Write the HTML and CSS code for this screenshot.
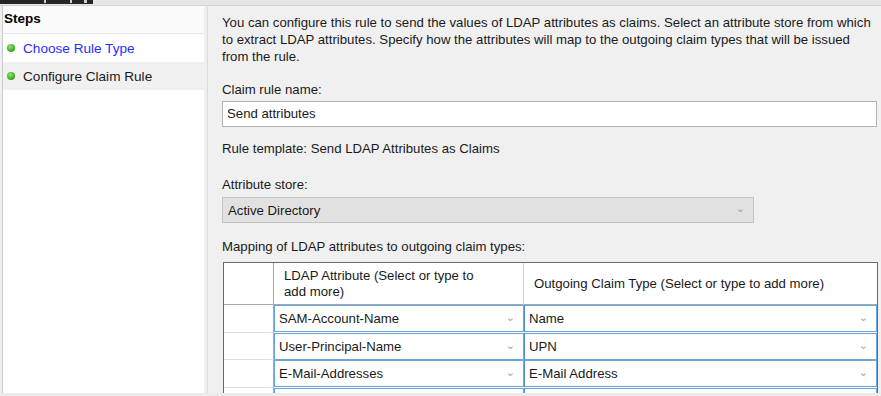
FILE: index.html
```html
<!DOCTYPE html>
<html>
<head>
<meta charset="utf-8">
<link rel="stylesheet" href="styles.css">
</head>
<body>
<div class="topstrip"><div class="darkbar"><span class="mark m1"></span><span class="mark m2"></span><span class="mark m3"></span></div></div>
<div class="main">
  <div class="steps">
    <div class="steps-inner">
      <div class="steps-head">Steps</div>
      <div class="step"><span class="dot"></span><span class="link">Choose Rule Type</span></div>
      <div class="step current"><span class="dot"></span><span>Configure Claim Rule</span></div>
    </div>
  </div>
  <div class="divider"></div>
  <div class="content">
    <p class="intro">You can configure this rule to send the values of LDAP attributes as claims. Select an attribute store from which<br>to extract LDAP attributes. Specify how the attributes will map to the outgoing claim types that will be issued<br>from the rule.</p>
    <div class="label l-name">Claim rule name:</div>
    <div class="textbox">Send attributes</div>
    <div class="label l-template">Rule template: Send LDAP Attributes as Claims</div>
    <div class="label l-store">Attribute store:</div>
    <div class="select"><span>Active Directory</span><span class="chev">&#8964;</span></div>
    <div class="label l-map">Mapping of LDAP attributes to outgoing claim types:</div>
    <div class="grid">
      <div class="gh rowhead"></div>
      <div class="gh c1">LDAP Attribute (Select or type to<br>add more)</div>
      <div class="gh c2">Outgoing Claim Type (Select or type to add more)</div>

      <div class="rh"></div>
      <div class="cell"><div class="combo"><span>SAM-Account-Name</span><span class="chev">&#8964;</span></div></div>
      <div class="cell"><div class="combo"><span>Name</span><span class="chev">&#8964;</span></div></div>

      <div class="rh"></div>
      <div class="cell"><div class="combo"><span>User-Principal-Name</span><span class="chev">&#8964;</span></div></div>
      <div class="cell"><div class="combo"><span>UPN</span><span class="chev">&#8964;</span></div></div>

      <div class="rh"></div>
      <div class="cell"><div class="combo"><span>E-Mail-Addresses</span><span class="chev">&#8964;</span></div></div>
      <div class="cell"><div class="combo"><span>E-Mail Address</span><span class="chev">&#8964;</span></div></div>

      <div class="rh"></div>
      <div class="cell"><div class="combo"></div></div>
      <div class="cell"><div class="combo"></div></div>
    </div>
  </div>
</div>
<div class="bottomstrip"></div>
</body>
</html>
```
FILE: styles.css
```css
html, body {
  margin: 0;
  padding: 0;
  width: 881px;
  height: 396px;
  overflow: hidden;
  background: #f0f0f0;
  font-family: "Liberation Sans", Arial, sans-serif;
  font-size: 13.2px;
  color: #1a1a1a;
}
.topstrip {
  height: 5px;
  background: #e6e6e6;
  border-bottom: 1px solid #d4d4d4;
  position: relative;
}
.darkbar {
  width: 93px;
  height: 4px;
  background: #262626;
  position: relative;
}
.mark {
  position: absolute;
  top: 0;
  width: 2px;
  height: 3px;
  background: #d0d0d0;
}
.m1 { left: 44px; }
.m2 { left: 70px; }
.m3 { left: 84px; width: 3px; }
.main {
  display: flex;
  height: 387px;
}
.steps {
  width: 204px;
  flex-shrink: 0;
  display: flex;
  background: #f0f0f0;
}
.steps-inner {
  margin-left: 2px;
  width: 201px;
  background: #ffffff;
  border-left: 1px solid #c6cbd0;
}
.steps-head {
  height: 27px;
  line-height: 26px;
  padding-left: 1px;
  font-weight: bold;
  font-size: 13.5px;
  color: #000;
  background: #fbfbfb;
  border-bottom: 1px solid #e8e8e8;
}
.step {
  height: 28px;
  display: flex;
  align-items: center;
  font-size: 13.6px;
  color: #1a1a1a;
}
.step.current {
  background: #f0f0f0;
}
.dot {
  width: 8px;
  height: 8px;
  border-radius: 50%;
  margin-left: 4px;
  margin-right: 8px;
  background: radial-gradient(circle at 40% 35%, #9be07a 0%, #3fb52a 55%, #2a8a1c 100%);
}
.link {
  color: #2b2bff;
}
.divider {
  width: 3px;
  flex-shrink: 0;
  border-right: 1px solid #dcdcdc;
  background: #f0f0f0;
}
.content {
  flex: 1;
  min-width: 0;
  padding-left: 14px;
}
.intro {
  margin: 8px 0 0 0;
  line-height: 17px;
  white-space: nowrap;
}
.label {
  line-height: 17px;
  white-space: nowrap;
}
.l-name { margin-top: 16px; }
.l-template { margin-top: 13px; }
.l-store { margin-top: 19px; }
.l-map { margin-top: 15px; }
.textbox {
  margin-top: 3px;
  height: 24px;
  line-height: 24px;
  border: 1px solid #b4b4b4;
  background: #fff;
  padding-left: 4px;
  width: 649px;
}
.select {
  margin-top: 4px;
  height: 24px;
  width: 525px;
  border: 1px solid #c4c4c4;
  background: #e1e1e1;
  display: flex;
  align-items: center;
  justify-content: space-between;
  padding-left: 5px;
}
.chev {
  color: #a4a4a4;
  font-size: 11px;
  line-height: 10px;
  height: 12px;
  margin-right: 8px;
  font-family: "DejaVu Sans", sans-serif;
}
.grid {
  margin-top: 7px;
  margin-left: 1px;
  width: 653px;
  height: 140px;
  border: 1px solid #6a6a6a;
  border-bottom: none;
  background: #fff;
  display: grid;
  grid-template-columns: 50px 250px 1fr;
  grid-template-rows: 42px 28px 27px 28px 28px;
  overflow: hidden;
}
.gh {
  background: #fff;
  border-right: 1px solid #d6d6d6;
  border-bottom: 1px solid #a8a8a8;
  line-height: 16px;
  display: flex;
  align-items: center;
  padding-left: 10px;
  color: #1a1a1a;
}
.gh.rowhead {
  padding-left: 0;
  border-right: 1px solid #a8a8a8;
}
.gh.c2 { border-right: none; }
.rh {
  background: #fff;
  border-right: 1px solid #a8a8a8;
  border-bottom: 1px solid #e0e0e0;
}
.cell {
  padding: 0;
  background: #fff;
}
.combo {
  height: 25px;
  border: 1px solid #6aa5dc;
  background: #fff;
  display: flex;
  align-items: center;
  justify-content: space-between;
  padding-left: 4px;
}
.cell + .cell .combo { border-left-color: #4f8fcf; }
.bottomstrip {
  position: absolute;
  left: 0;
  top: 393px;
  width: 881px;
  height: 3px;
  background: #ececec;
}
```
